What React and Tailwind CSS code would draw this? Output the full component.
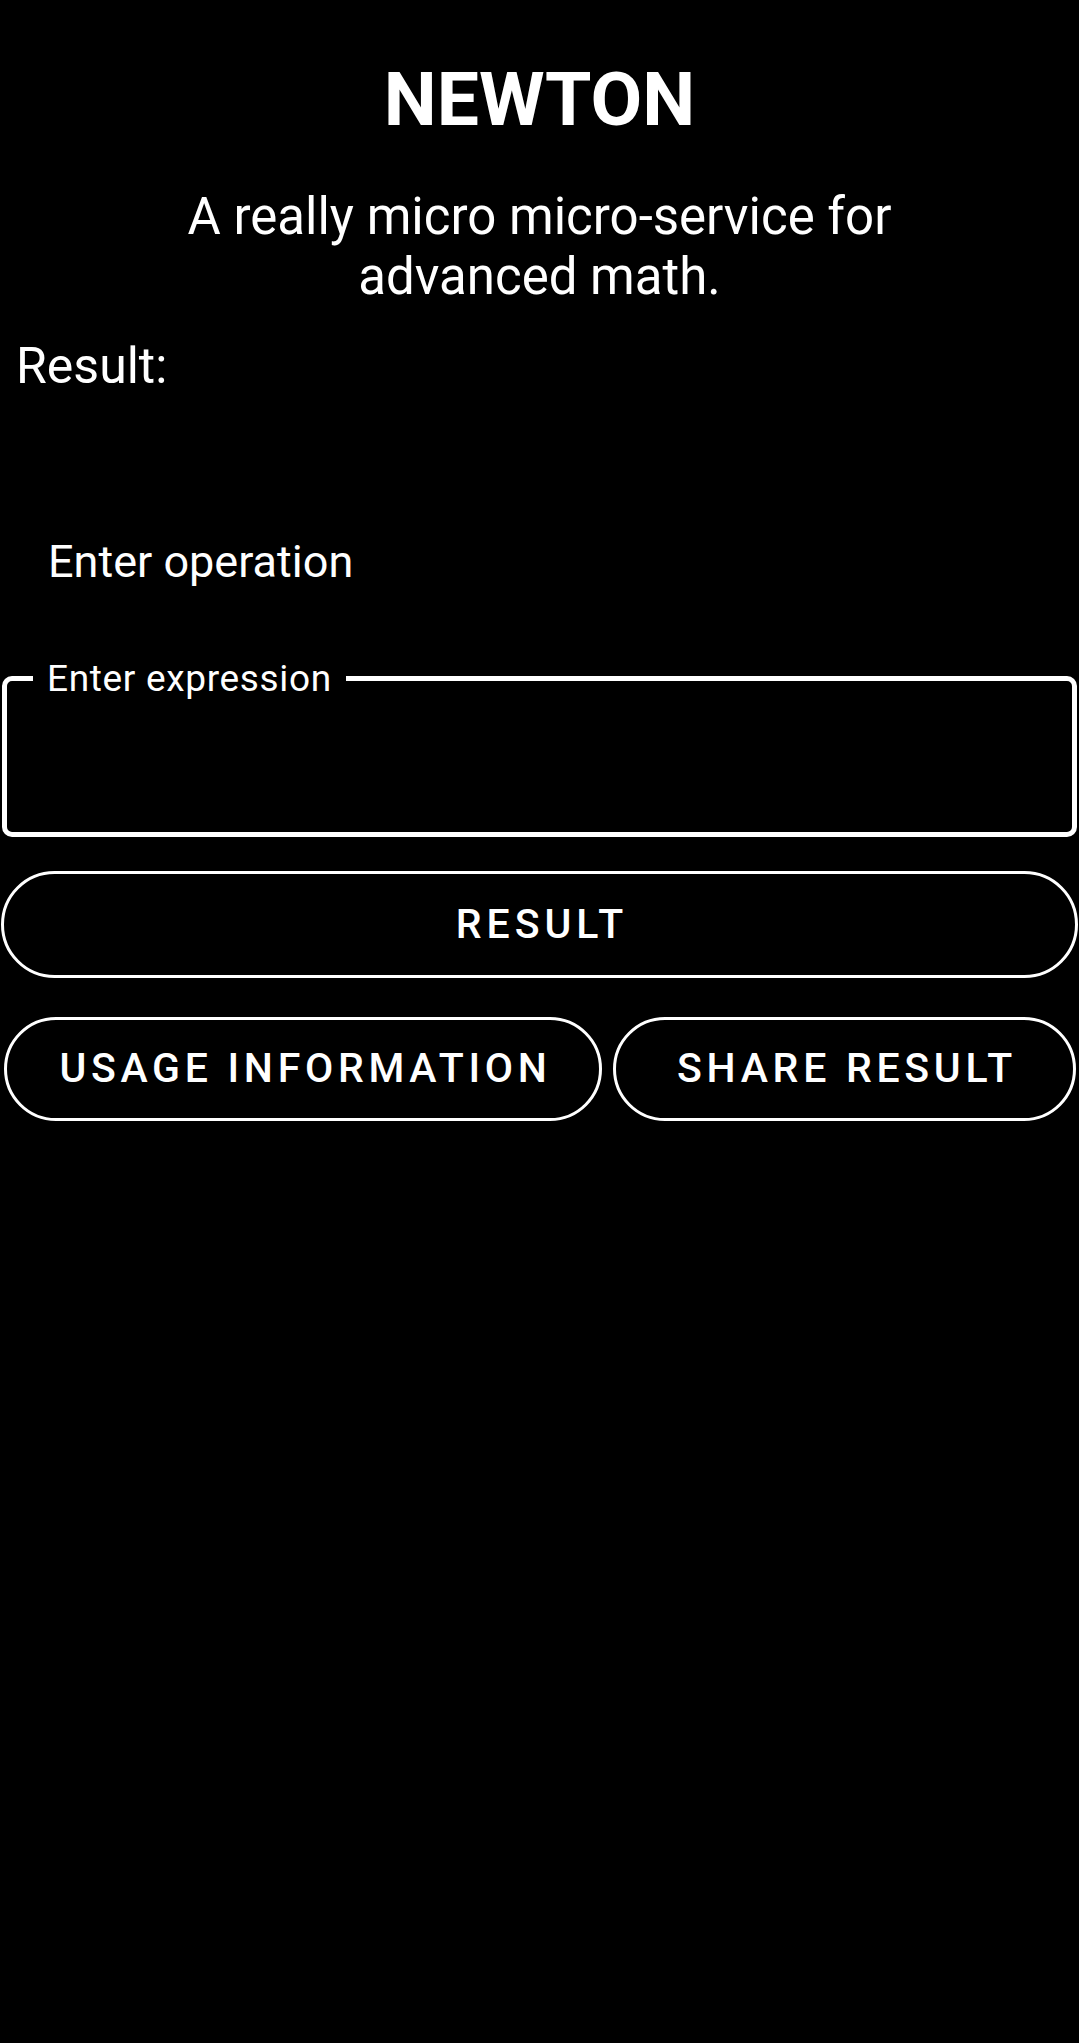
import React from "react";

const font = { fontFamily: "Roboto, 'Noto Sans', sans-serif" };

export default function App() {
  return (
    <div className="min-h-screen bg-black text-white" style={font}>
      {/* header */}
      <h1 className="pt-[55px] text-center text-[75px] leading-[89px] font-bold">NEWTON</h1>
      <p className="mx-auto mt-[43px] max-w-[800px] text-center text-[51px] leading-[60px]">
        A really micro micro-service for advanced math.
      </p>

      <div className="mt-[30px] pl-4 text-[50px] leading-[58px]">Result:</div>

      <div className="mt-[142px] pl-[48px] text-[45px] leading-[50px]">Enter operation</div>

      {/* expression field */}
      <fieldset className="mx-[2px] mt-[73px] rounded-[10px] border-[5px] border-white p-0">
        <legend className="ml-[26px] px-[14px] text-[37px] leading-[37px] tracking-[0.018em]">Enter expression</legend>
        <div className="h-[135px]" />
      </fieldset>

      <button className="mx-[1px] mt-[34px] flex h-[107px] w-[1077px] items-center justify-center rounded-full border-[3px] border-white pl-[5px] text-[41px] font-medium tracking-[0.12em]">
        RESULT
      </button>

      <div className="ml-1 mr-[3px] mt-[39px] flex gap-[11px]">
        <button className="flex h-[104px] w-[598px] items-center justify-center rounded-full border-[3px] border-white pl-[5px] text-[41px] font-medium tracking-[0.115em]">
          USAGE INFORMATION
        </button>
        <button className="flex h-[104px] flex-1 items-center justify-center rounded-full border-[3px] border-white pl-[5px] text-[41px] font-medium tracking-[0.115em]">
          SHARE RESULT
        </button>
      </div>
    </div>
  );
}
